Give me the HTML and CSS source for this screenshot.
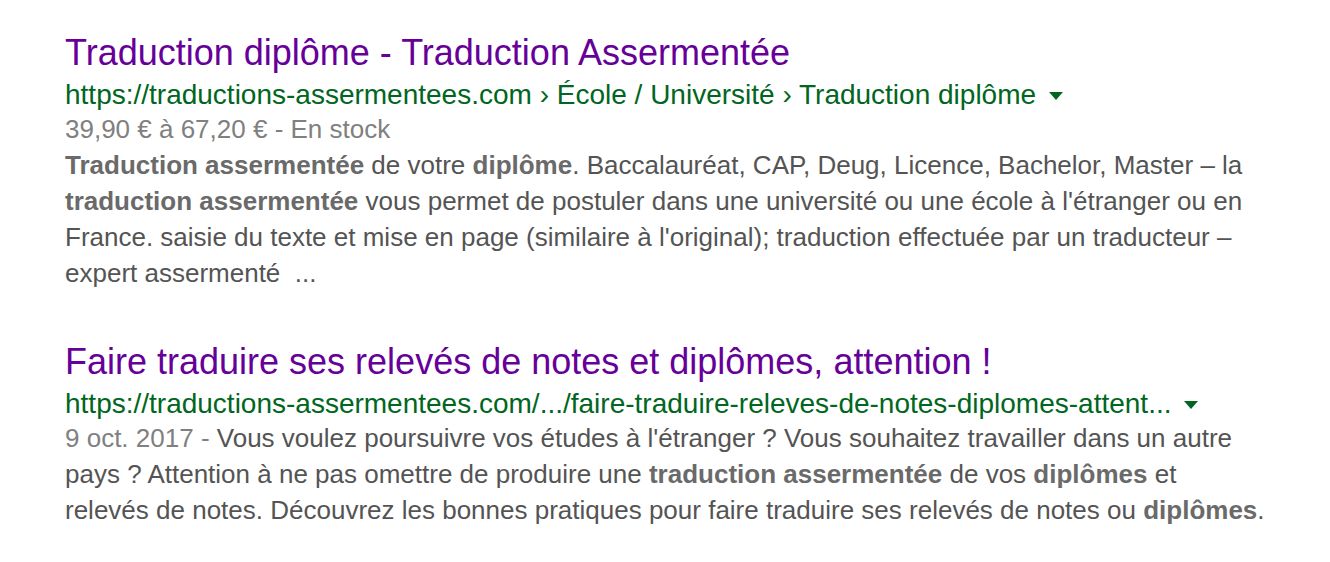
FILE: index.html
```html
<!DOCTYPE html>
<html lang="fr">
    <head>
        <meta charset="utf-8">
        <title>Résultats</title>
        <link rel="stylesheet" href="styles.css">
    </head>
    <body>
        <div class="results">
            <div class="result">
                <h3 class="result-title"><a href="#">Traduction diplôme - Traduction Assermentée</a></h3>
                <div class="result-url">
                    <cite>https://traductions-assermentees.com › École / Université › Traduction diplôme</cite>
                    <span class="url-arrow"></span>
                </div>
                <div class="result-meta">39,90 € à 67,20 € - En stock</div>
                <p class="result-snippet"><b>Traduction assermentée</b> de votre <b>diplôme</b>. Baccalauréat, CAP, Deug, Licence, Bachelor, Master – la<br>
                    <b>traduction assermentée</b> vous permet de postuler dans une université ou une école à l'étranger ou en<br>
                    France. saisie du texte et mise en page (similaire à l'original); traduction effectuée par un traducteur –<br>
                    expert assermenté&nbsp; ...</p>
            </div>
            <div class="result">
                <h3 class="result-title"><a href="#">Faire traduire ses relevés de notes et diplômes, attention !</a></h3>
                <div class="result-url">
                    <cite>https://traductions-assermentees.com/.../faire-traduire-releves-de-notes-diplomes-attent...</cite>
                    <span class="url-arrow"></span>
                </div>
                <p class="result-snippet"><span class="result-date">9 oct. 2017 - </span>Vous voulez poursuivre vos études à l'étranger ? Vous souhaitez travailler dans un autre<br>
                    pays ? Attention à ne pas omettre de produire une <b>traduction assermentée</b> de vos <b>diplômes</b> et<br>
                    relevés de notes. Découvrez les bonnes pratiques pour faire traduire ses relevés de notes ou <b>diplômes</b>.</p>
            </div>
        </div>
    </body>
</html>
```

FILE: styles.css
```css
html, body {
    margin: 0;
    padding: 0;
}
body {
    background: #fff;
    font-family: "Liberation Sans", Arial, sans-serif;
}
.results {
    padding: 23px 0 0 65px;
    width: 1260px;
}
.result {
    margin-bottom: 41px;
}
.result-title {
    margin: 0;
    padding-top: 8px;
    font-size: 36px;
    font-weight: normal;
    line-height: 44px;
}
.result-title a {
    color: #660099;
    text-decoration: none;
}
.result-url {
    display: flex;
    align-items: center;
    height: 32px;
    margin-top: 4px;
}
.result-url cite {
    font-style: normal;
    font-size: 28px;
    color: #006621;
    white-space: nowrap;
}
.url-arrow {
    margin-left: 13px;
    margin-top: 2px;
    border-top: 8px solid #006621;
    border-left: 7px solid transparent;
    border-right: 7px solid transparent;
}
.result-meta {
    font-size: 26px;
    line-height: 36px;
    color: #808080;
}
.result-snippet {
    margin: 0;
    font-size: 26px;
    line-height: 36px;
    color: #545454;
    white-space: nowrap;
}
.result-snippet b {
    color: #6a6a6a;
}
.result-date {
    color: #808080;
}
```
